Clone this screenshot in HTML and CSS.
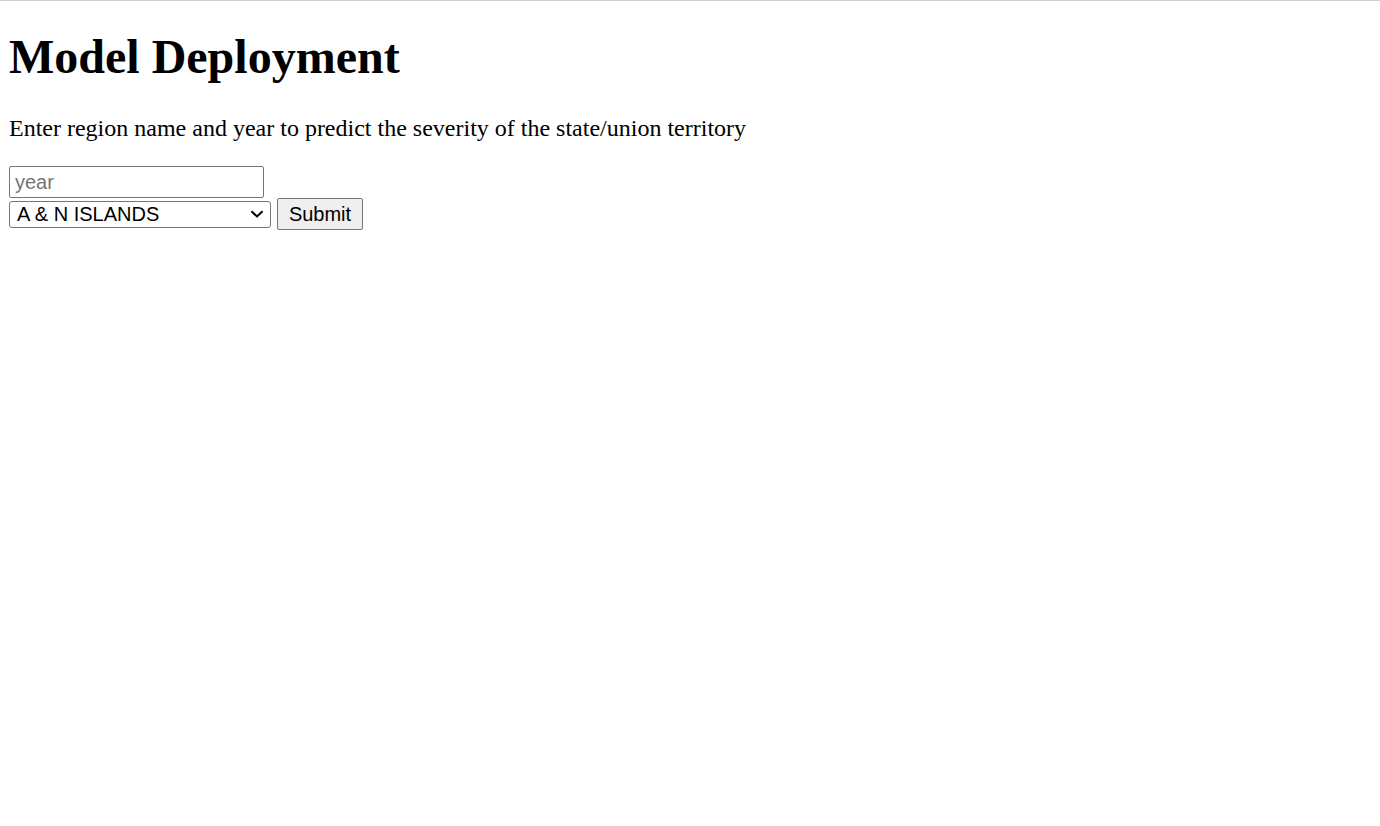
FILE: index.html
```html
<!DOCTYPE html>
<html>
<head>
<meta charset="utf-8">
<title>Model Deployment</title>
<link rel="stylesheet" href="styles.css">
</head>
<body>
<h1 class="title">Model Deployment</h1>
<p class="lead">Enter region name and year to predict the severity of the state/union territory</p>
<form class="form">
  <input class="year" type="text" placeholder="year">
  <div class="row">
    <span class="select-wrap">
      <select class="region">
        <option>A &amp; N ISLANDS</option>
        <option>ANDHRA PRADESH</option>
        <option>ARUNACHAL PRADESH</option>
        <option>ASSAM</option>
        <option>BIHAR</option>
      </select>
      <svg class="chevron" width="14" height="8" viewBox="0 0 14 8" aria-hidden="true">
        <path d="M1.4 1.2 L7 6.4 L12.6 1.2" fill="none" stroke="#000" stroke-width="2.1"/>
      </svg>
    </span>
    <button class="submit" type="button">Submit</button>
  </div>
</form>
</body>
</html>
```
FILE: styles.css
```css
html {
  border-top: 1px solid #cfcfcf;
  background: #ffffff;
}
body {
  margin: 0;
  padding: 0 9px;
  font-family: "Liberation Serif", "Times New Roman", serif;
  color: #000;
}
.title {
  font-size: 48px;
  line-height: 53px;
  margin: 29px 0 0;
  font-weight: bold;
}
.lead {
  font-size: 24px;
  line-height: 27px;
  margin: 32px 0 0;
}
.form {
  margin-top: 24px;
}
.year {
  display: block;
  box-sizing: border-box;
  width: 255px;
  height: 32px;
  margin: 0;
  padding: 1px 5px;
  border: 1px solid #767676;
  border-radius: 2px;
  font-family: "Liberation Sans", Arial, sans-serif;
  font-size: 20px;
  color: #000;
}
.year::placeholder {
  color: #757575;
}
.row {
  display: flex;
  align-items: center;
  gap: 6px;
  height: 32px;
}
.select-wrap {
  position: relative;
  display: block;
  width: 262px;
  height: 27px;
}
.region {
  display: block;
  appearance: none;
  -webkit-appearance: none;
  box-sizing: border-box;
  width: 262px;
  height: 27px;
  margin: 0;
  padding: 0 30px 0 7px;
  border: 1px solid #767676;
  border-radius: 3px;
  background: #fff;
  font-family: "Liberation Sans", Arial, sans-serif;
  font-size: 20px;
  color: #000;
}
.chevron {
  position: absolute;
  right: 7px;
  top: 9px;
  pointer-events: none;
}
.submit {
  box-sizing: border-box;
  width: 86px;
  height: 32px;
  margin: 0;
  padding: 1px 6px;
  border: 1px solid #767676;
  border-radius: 2px;
  background: #efefef;
  font-family: "Liberation Sans", Arial, sans-serif;
  font-size: 20px;
  color: #000;
}
```
